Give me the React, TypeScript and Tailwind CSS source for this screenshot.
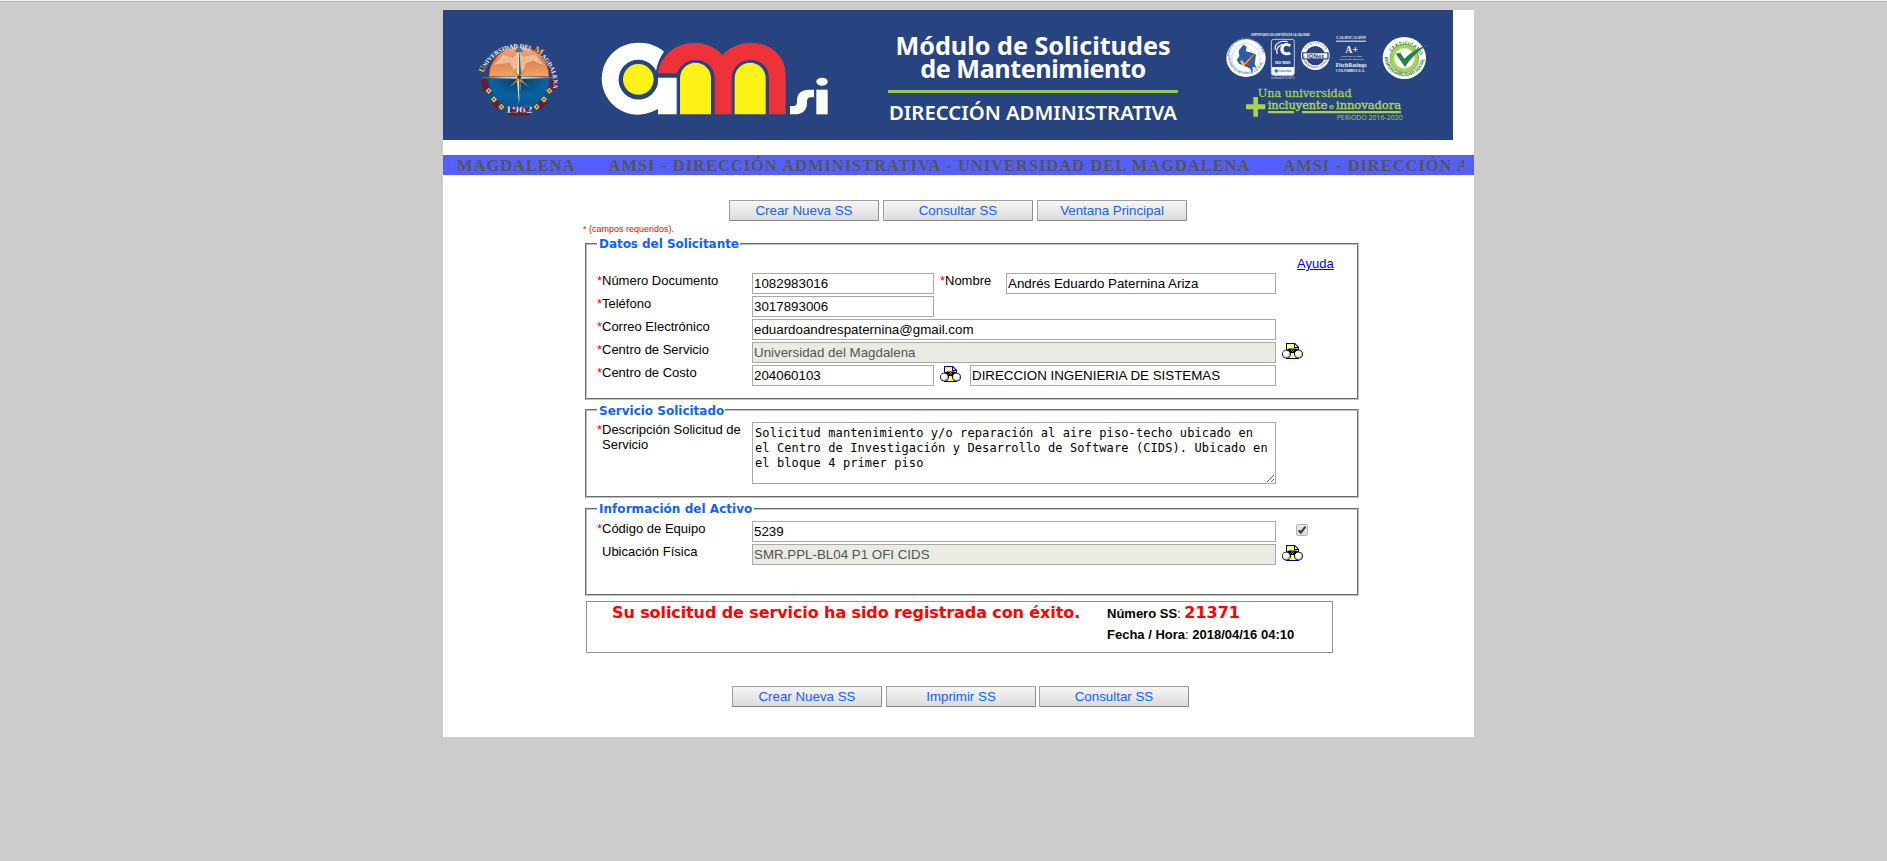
import React from "react";

const ticker = "AMSI - DIRECCIÓN ADMINISTRATIVA - UNIVERSIDAD DEL MAGDALENA";

function Seal() {
  return (
    <svg width="95" height="92" viewBox="0 0 285 276" className="mt-[20px] shrink-0">
      <defs>
        <linearGradient id="sky" x1="0" y1="0" x2="0" y2="1">
          <stop offset="0" stopColor="#f3b08a" />
          <stop offset="0.5" stopColor="#e08258" />
          <stop offset="1" stopColor="#f0a860" />
        </linearGradient>
        <radialGradient id="sea" cx="0.5" cy="0.1" r="0.9">
          <stop offset="0" stopColor="#0b3a66" />
          <stop offset="0.5" stopColor="#0a62a4" />
          <stop offset="1" stopColor="#0a5590" />
        </radialGradient>
        <path id="sealArc" d="M41 129 A107 107 0 0 1 249 176" />
      </defs>
      <path d="M43 143 A104 104 0 0 0 251 143" fill="none" stroke="#14507e" strokeWidth="18" />
      <path d="M43 146 A104 104 0 0 0 251 146" fill="none" stroke="#6b1c35" strokeWidth="18" strokeDasharray="36 40 24 34 60 34 24 40 40" />
      <path d="M54 142 A93 93 0 0 1 240 142Z" fill="url(#sky)" stroke="#3a3340" strokeWidth="5" />
      <path d="M57 138 A90 90 0 0 1 237 138" fill="none" stroke="#b8493a" strokeWidth="3" />
      <path d="M70 104 L100 74 L128 84 L146 66 L160 80 L196 74 L222 106 L190 92 L168 100 L160 122 L146 112 L130 120 L120 98Z" fill="#f7cfae" opacity="0.7" />
      <path d="M54 144 A93 93 0 0 0 240 144Z" fill="url(#sea)" stroke="#1b4773" strokeWidth="4" />
      {[[56, 182], [72, 208], [94, 230], [238, 182], [222, 208], [200, 230]].map(([x, y]) => (
        <g key={`${x}-${y}`}>
          <path d={`M${x - 9} ${y} l9 -9 l9 9 l-9 10z`} fill="#f2b75c" />
          <circle cx={x} cy={y} r="2.5" fill="#4b2030" />
        </g>
      ))}
      <path d="M34 143 L140 139 L260 143 L150 147Z" fill="#e8dcae" stroke="#3f6f9c" strokeWidth="1.5" />
      <path d="M147 46 L154 140 L147 222 L140 140Z" fill="#f4e2a8" />
      <path d="M147 46 L154 140 L147 222Z" fill="#1b6b9e" />
      <path d="M147 142 L122 116 L152 138Z M147 142 L172 116 L142 138Z M147 142 L118 172 L152 148Z M147 142 L178 172 L142 148Z" fill="#c88a42" />
      <circle cx="147" cy="142" r="6" fill="#5a4420" />
      <path d="M134 66 L147 46 L160 66Z" fill="#2a7fae" />
      <text fontFamily="Liberation Serif, serif" fontWeight="bold" fontSize="18.5" fill="#f3f5fa">
        <textPath href="#sealArc">
          <tspan fill="#f0ac45" fontSize="26">U</tspan>NIVERSIDAD DEL <tspan fill="#f0ac45" fontSize="30">M</tspan>AGDALENA
        </textPath>
      </text>
      <text x="106" y="249" fontFamily="Liberation Serif, serif" fontWeight="bold" fontSize="31" textLength="82" lengthAdjust="spacingAndGlyphs" fill="#fff" stroke="#1b2a4a" strokeWidth="1">1962</text>
    </svg>
  );
}

function AmsiLogo() {
  return (
    <svg width="232" height="77" viewBox="510 120 696 231" className="ml-[35px] mt-[30px] shrink-0">
      <path d="M702 155 C684 138 658 128 625 128 A108 108 0 1 0 664 336 L684 327 V343 H740 V233 H684 A59 59 0 1 1 678 213 C682 190 690 172 702 155Z" fill="#fff" />
      <circle cx="625" cy="238" r="59" fill="#284480" />
      <circle cx="625" cy="238" r="46" fill="#fff216" />
      <path d="M684 220 C690 165 740 128 795 128 C830 128 860 145 877 165 C895 145 925 128 962 128 C1025 128 1067 170 1067 225 V343 H1017 V235 C1017 202 995 180 961 180 C928 180 905 205 905 237 V343 H854 V235 C854 202 830 180 797 180 C768 180 748 198 741 220Z" fill="#ee3338" />
      <path d="M750 343 V235 a46.5 47 0 0 1 93 0 V343Z M914 343 V235 a46.5 47 0 0 1 93 0 V343Z" fill="#fff216" />
      <path d="M1080 343 V318 H1089 C1099 318 1101 312 1101 302 C1101 280 1115 269 1138 269 H1152 V292 H1144 C1133 292 1131 298 1131 308 C1131 331 1118 343 1092 343Z" fill="#fff" />
      <ellipse cx="1176" cy="245" rx="17" ry="12" fill="#fff" />
      <path d="M1159 269 H1193 V343 H1159Z" fill="#fff" />
    </svg>
  );
}

function Certificates() {
  return (
    <svg width="215" height="96" viewBox="0 0 645 288" className="ml-[42px] mt-[18px] shrink-0" fontFamily="Open Sans, sans-serif">
      <defs>
        <path id="c1" d="M28 85 A50 50 0 0 1 128 85" />
        <path id="c2" d="M24 85 A54 54 0 0 0 132 85" />
        <path id="c3" d="M252 82 A34 34 0 0 1 320 82" />
        <path id="c4" d="M247 82 A39 39 0 0 0 325 82" />
        <path id="c5" d="M506 92 A49 49 0 0 1 602 88" />
        <path id="c6" d="M493 84 A60 60 0 0 0 614 84" />
      </defs>
      <text x="92" y="25" fontSize="8" fontWeight="bold" fill="#e3e8f2" textLength="178" lengthAdjust="spacingAndGlyphs">CERTIFICADO DE GESTIÓN DE LA CALIDAD</text>

      <ellipse cx="78" cy="90" rx="59" ry="57" fill="#fff" />
      <circle cx="78" cy="90" r="43" fill="none" stroke="#9fb6dc" strokeWidth="1.5" />
      <text fontSize="9" fontWeight="bold" fill="#5e83bd"><textPath href="#c1">MODELO ESTÁNDAR DE CONTROL</textPath></text>
      <text fontSize="9" fontWeight="bold" fill="#5e83bd"><textPath href="#c2">SISTEMA DE GESTIÓN DE CALIDAD</textPath></text>
      <path d="M70 50 L80 56 L78 70 L96 74 L108 80 L104 108 L110 120 L98 116 L98 136 L90 122 L76 114 L58 108 L50 96 L58 84 L56 68Z" fill="#2f5ea8" />
      <path d="M60 99 L66 97 L73 107 L104 76 L76 116 L70 114Z" fill="#ffe21a" />
      <path d="M72 109 L74 111 L90 94 L104 78 L78 116 L73 114Z" fill="#e3212b" />

      <rect x="154" y="34" width="69" height="108" rx="7" fill="#284480" stroke="#dfe6f1" strokeWidth="2.5" />
      <path d="M213 50 C200 40 180 47 181 64 C182 82 200 86 214 78 L207 71 C197 75 190 71 191 62 C192 53 201 51 208 57Z" fill="#fff" />
      <path d="M166 66 C162 48 180 36 203 41 M172 78 C166 60 178 46 204 49" fill="none" stroke="#fff" strokeWidth="3.5" />
      <text x="165" y="108" fontSize="12" fontWeight="bold" fill="#fff" textLength="47" lengthAdjust="spacingAndGlyphs">ISO 9001</text>
      <path d="M155 117 H222 V135 Q222 141 216 141 H161 Q155 141 155 135Z" fill="#fff" />
      <path d="M162 129 l7 -7 l7 7 l-7 7z" fill="#2787bd" />
      <text x="177" y="133" fontSize="11" fontWeight="bold" fill="#2787bd" textLength="38" lengthAdjust="spacingAndGlyphs">icontec</text>
      <text x="153" y="152" fontSize="8" fill="#e3e8f2" textLength="72" lengthAdjust="spacingAndGlyphs">Certificado Nº SC 4373-1</text>

      <circle cx="286" cy="83" r="43" fill="#fff" />
      <circle cx="286" cy="83" r="29" fill="#284480" />
      <rect x="246" y="73" width="80" height="21" fill="#284480" />
      <rect x="250" y="76" width="72" height="15" fill="#fff" />
      <text x="260" y="89" fontSize="15" fontWeight="bold" fill="#284480" textLength="52" lengthAdjust="spacingAndGlyphs">IQNet</text>
      <text fontSize="9" fontWeight="bold" fill="#6579a3"><textPath href="#c3" startOffset="20" textLength="70">CERTIFIED</textPath></text>
      <text fontSize="9" fontWeight="bold" fill="#6579a3"><textPath href="#c4" startOffset="3" textLength="112">MANAGEMENT SYSTEM</textPath></text>

      <g fill="#f2f4f9" fontFamily="Liberation Serif, serif">
        <text x="348" y="33" fontSize="12" fontWeight="bold" textLength="90" lengthAdjust="spacingAndGlyphs">CALIFICACIÓN</text>
        <rect x="348" y="38" width="90" height="3" />
        <text x="376" y="75" fontSize="33" fontWeight="bold" textLength="38" lengthAdjust="spacingAndGlyphs">A+</text>
        <text x="361" y="86" fontSize="8" textLength="64">Capacidad de pago</text>
        <text x="357" y="95" fontSize="8" textLength="74">Calificación largo plazo</text>
        <text x="347" y="116" fontSize="19" fontWeight="bold" textLength="93" lengthAdjust="spacingAndGlyphs">FitchRatings</text>
        <text x="347" y="132" fontSize="12" fontWeight="bold" textLength="88" lengthAdjust="spacingAndGlyphs">COLOMBIA S.A.</text>
      </g>

      <ellipse cx="553" cy="90" rx="65" ry="63" fill="#fff" />
      <circle cx="553" cy="91" r="43" fill="#a8d05a" stroke="#78b843" strokeWidth="3" />
      <circle cx="553" cy="91" r="30" fill="#fff" stroke="#d9ebb6" strokeWidth="3" />
      <text fontSize="14" fontWeight="bold" fill="#438746"><textPath href="#c5" startOffset="22" textLength="106">CERTIFICADO</textPath></text>
      <text fontSize="14" fontWeight="bold" fill="#438746"><textPath href="#c6" startOffset="2" textLength="180">RESPONSABILIDAD SOCIAL</textPath></text>
      <path d="M527 77 L541 74 L553 92 Q582 63 622 51 Q580 78 555 117Z" fill="#27804a" />

      <g fill="#a9d14b" fontFamily="DejaVu Serif, serif">
        <path d="M100 207 h14 v22 h22 v15 h-22 v22 h-14 v-22 h-22 v-15 h22z" />
        <text x="113" y="208" fontSize="31" stroke="#a9d14b" strokeWidth="0.8" textLength="282" lengthAdjust="spacingAndGlyphs">Una universidad</text>
        <text x="143" y="244" fontSize="31" stroke="#a9d14b" strokeWidth="1.4" textLength="179" lengthAdjust="spacingAndGlyphs">incluyente</text>
        <text x="327" y="244" fontSize="23" stroke="#a9d14b" strokeWidth="0.8" textLength="15" lengthAdjust="spacingAndGlyphs">e</text>
        <text x="348" y="244" fontSize="31" stroke="#a9d14b" strokeWidth="1.4" textLength="195" lengthAdjust="spacingAndGlyphs">innovadora</text>
        <path d="M144 249 h78 v7 h-78z M246 249 h297 v7 h-297z" />
        <text x="350" y="275" fontFamily="Open Sans, sans-serif" fontSize="20" textLength="198" lengthAdjust="spacingAndGlyphs">PERIODO 2016-2020</text>
      </g>
    </svg>
  );
}

function Binoculars({ className = "" }: { className?: string }) {
  return (
    <svg width="21" height="16" viewBox="0 0 21 16" className={`shrink-0 ${className}`}>
      <path d="M4 0H13L17 4V16H4Z" fill="#000090" />
      <path d="M5 1H12V5H16V15H5Z" fill="#fdfd7a" />
      <path d="M13 1.5V4H15.5Z" fill="#fff" />
      <path d="M6 2h1v1H6zM8 2h1v1H8zM10 2h1v1h-1zM7 3h1v1H7zM9 3h1v1H9zM6 4h1v1H6z" fill="#fff" />
      <path d="M3 7.5L7 5.5H14L18 7.5L13.5 11.5L11.5 10H9.5L7.5 11.5Z" fill="#000" />
      <path d="M10 6h1v1h-1zM9 7h1v1H9zM11 7h1v1h-1zM10 8h1v1h-1z" fill="#8c8c20" />
      <circle cx="4.4" cy="11.2" r="4.4" fill="#000" />
      <circle cx="16.6" cy="11.2" r="4.4" fill="#000" />
      <circle cx="4.4" cy="11.2" r="3.6" fill="#c2c2c2" />
      <circle cx="16.6" cy="11.2" r="3.6" fill="#c2c2c2" />
      <circle cx="3.9" cy="10.6" r="2.8" fill="#fff" />
      <circle cx="16.1" cy="10.6" r="2.8" fill="#fff" />
    </svg>
  );
}

function Button({ children, className = "" }: { children: React.ReactNode; className?: string }) {
  return (
    <button
      className={`h-[21px] w-[150px] shrink-0 rounded-[1px] border border-[#a0a0a0] border-r-[#8c8c8c] border-b-[#858585] bg-linear-to-b from-[#f6f6f6] to-[#dcdcdc] text-[13.33px] leading-[19px] text-[#0f62fe] ${className}`}
    >
      {children}
    </button>
  );
}

function Label({ children, required = true, className = "w-[155px]" }: { children: React.ReactNode; required?: boolean; className?: string }) {
  return (
    <div className={`flex shrink-0 text-[13px] leading-[15px] ${className}`}>
      <span className="w-[5px] shrink-0 text-[#f00]">{required ? "*" : ""}</span>
      <span>{children}</span>
    </div>
  );
}

function Field({ value, className, disabled = false }: { value: string; className: string; disabled?: boolean }) {
  return (
    <input
      readOnly
      disabled={disabled}
      value={value}
      className={`h-[21px] shrink-0 border border-[#a9a9a9] bg-white px-[1px] text-[13.33px] leading-[17px] outline-none disabled:bg-[#ebebe4] disabled:text-[#545454] ${className}`}
    />
  );
}

function Section({ title, legendClass, className, children }: { title: string; legendClass: string; className: string; children: React.ReactNode }) {
  return (
    <fieldset className={`ml-[142px] w-[774px] border-2 border-[#c0c0c0] pl-[10px] [border-style:groove] ${className}`}>
      <legend className={`h-[16px] px-[2px] font-['DejaVu_Sans'] text-[12px] font-bold whitespace-nowrap text-[#0f62fe] ${legendClass}`}>{title}</legend>
      {children}
    </fieldset>
  );
}

export default function App() {
  return (
    <div className="min-h-[861px] border-t border-[#f1f1f1] bg-[#cccccc] font-['Liberation_Sans',sans-serif] text-black">
      <div className="h-px bg-[#b1b6b3]" />
      <main className="mt-[8px] ml-[443px] h-[727px] w-[1031px] overflow-hidden bg-white">
        <header className="flex h-[130px] w-[1010px] items-start bg-[#284480] pl-[27px]">
          <Seal />
          <AmsiLogo />
          <div className="ml-[56px] flex w-[290px] shrink-0 flex-col items-center pt-[24px] font-['Noto_Sans',sans-serif] whitespace-nowrap text-white">
            <div className="text-[25.2px] leading-[23px] font-bold">Módulo de Solicitudes</div>
            <div className="text-[25.2px] leading-[23px] font-bold tracking-[-0.45px]">de Mantenimiento</div>
            <div className="mt-[10px] h-[3px] w-[290px] bg-[#9cc544]" />
            <div className="mt-[5px] text-[20.3px] leading-[28px] font-semibold">DIRECCIÓN ADMINISTRATIVA</div>
          </div>
          <Certificates />
        </header>

        <div className="mt-[15px] h-[20px] bg-[#555fff] px-[10px]">
          <div className="flex h-[20px] gap-[33px] overflow-hidden pl-[4px] font-['Liberation_Serif',serif] text-[16.5px] leading-[22px] font-bold tracking-[0.95px] whitespace-nowrap text-[#555555] [word-spacing:0.4px]">
            <span>MAGDALENA</span>
            <span>{ticker}</span>
            <span>{ticker}</span>
          </div>
        </div>

        <div className="mt-[25px] ml-[286px] flex gap-[4px]">
          <Button>Crear Nueva SS</Button>
          <Button>Consultar SS</Button>
          <Button>Ventana Principal</Button>
        </div>
        <div className="ml-[140px] h-[15px] text-[9px] leading-[17px] text-[#f00]">* (campos requeridos).</div>

        <Section title="Datos del Solicitante" legendClass="w-[143px] leading-[16px] tracking-[-0.05px]" className="h-[164px]">
          <div className="flex h-[21px] pt-[4px] pl-[700px] text-[13px] leading-[15px]">
            <a className="text-[#0000ee] underline">Ayuda</a>
          </div>
          <div className="flex flex-col gap-[2px]">
            <div className="flex">
              <Label>Número Documento</Label>
              <Field value="1082983016" className="w-[182px]" />
              <Label className="ml-[6px] w-[66px]">Nombre</Label>
              <Field value="Andrés Eduardo Paternina Ariza" className="w-[270px]" />
            </div>
            <div className="flex">
              <Label>Teléfono</Label>
              <Field value="3017893006" className="w-[182px]" />
            </div>
            <div className="flex">
              <Label>Correo Electrónico</Label>
              <Field value="eduardoandrespaternina@gmail.com" className="w-[524px]" />
            </div>
            <div className="flex">
              <Label>Centro de Servicio</Label>
              <Field disabled value="Universidad del Magdalena" className="w-[524px]" />
              <Binoculars className="mt-px ml-[6px]" />
            </div>
            <div className="flex">
              <Label>Centro de Costo</Label>
              <Field value="204060103" className="w-[182px]" />
              <Binoculars className="mt-px ml-[6px]" />
              <Field value="DIRECCION INGENIERIA DE SISTEMAS" className="ml-[9px] w-[306px]" />
            </div>
          </div>
        </Section>

        <Section title="Servicio Solicitado" legendClass="w-[128px] leading-[18px]" className="mt-[2px] h-[96px]">
          <div className="flex pt-[4px]">
            <Label>Descripción Solicitud de Servicio</Label>
            <textarea
              readOnly
              className="block h-[62px] w-[524px] resize overflow-hidden border border-[#a9a9a9] bg-white p-[2px] pt-[3px] font-['DejaVu_Sans_Mono',monospace] text-[12px] leading-[15px] tracking-[0.1px] outline-none"
              value={"Solicitud mantenimiento y/o reparación al aire piso-techo ubicado en\nel Centro de Investigación y Desarrollo de Software (CIDS). Ubicado en\nel bloque 4 primer piso"}
            />
          </div>
        </Section>

        <Section title="Información del Activo" legendClass="w-[157px] leading-[16px] tracking-[0.04px]" className="mt-[3px] h-[95px]">
          <div className="flex flex-col gap-[2px] pt-[4px]">
            <div className="flex">
              <Label>Código de Equipo</Label>
              <Field value="5239" className="w-[524px]" />
              <div className="mt-[3px] ml-[20px] flex h-[12px] w-[12px] items-center justify-center rounded-[2px] border border-[#b3b3b3] bg-linear-to-b from-[#ededed] to-[#dcdcdc]">
                <svg width="10" height="10" viewBox="0 0 10 10">
                  <path d="M1.6 5.2 L3.9 7.6 L8.4 1.6" fill="none" stroke="#3c3c3c" strokeWidth="2.2" />
                </svg>
              </div>
            </div>
            <div className="flex">
              <Label required={false}>Ubicación Física</Label>
              <Field disabled value="SMR.PPL-BL04 P1 OFI CIDS" className="w-[524px]" />
              <Binoculars className="mt-px ml-[6px]" />
            </div>
          </div>
        </Section>

        <div className="mt-[5px] ml-[143px] flex h-[52px] w-[747px] border border-[#919191] pl-[25px] whitespace-nowrap">
          <div className="w-[495px] shrink-0 font-['DejaVu_Sans'] text-[16px] leading-[21px] font-bold tracking-[-0.1px] text-[#f00]">Su solicitud de servicio ha sido registrada con éxito.</div>
          <div className="text-[13px]">
            <div className="flex h-[21px] items-baseline leading-[21px]">
              <b>Número SS</b>:&nbsp;<b className="font-['DejaVu_Sans'] text-[16px] text-[#f00]">21371</b>
            </div>
            <div className="leading-[23px]">
              <b>Fecha / Hora</b>: <b>2018/04/16 04:10</b>
            </div>
          </div>
        </div>

        <div className="mt-[33px] ml-[289px] flex gap-[4px]">
          <Button>Crear Nueva SS</Button>
          <Button>Imprimir SS</Button>
          <Button className="-ml-px">Consultar SS</Button>
        </div>
      </main>
    </div>
  );
}
